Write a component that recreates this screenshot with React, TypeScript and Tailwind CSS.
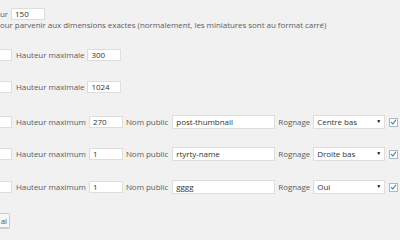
import React from 'react';

function Num({ value }: { value: string }) {
  return <div className="w-[34px] h-[12px] bg-white border border-[#dddddd] px-[3px] text-[8px] leading-[10px] text-[#333]">{value}</div>;
}

function Txt({ value, className = '' }: { value: string; className?: string }) {
  return <div className={"w-[103px] h-[14px] bg-white border border-[#dddddd] px-[3px] text-[8px] leading-[12px] text-[#333] " + className}>{value}</div>;
}

function Select({ value }: { value: string }) {
  return <div className="w-[72px] h-[14px] bg-white border border-[#dddddd] pl-[3px] pr-[3px] flex items-center justify-between text-[8px] text-[#333]">
    <span>{value}</span>
    <span className="text-[5px] text-black">▼</span>
  </div>;
}

function Check() {
  return <div className="w-[9px] h-[9px] bg-white border border-[#b4b9be] flex items-center justify-center">
    <svg viewBox="0 0 10 10" className="w-[8px] h-[8px]">
      <path d="M1.5 5.2 L4 7.6 L8.8 1.8" fill="none" stroke="#1e8cbe" strokeWidth="1.6" />
    </svg>
  </div>;
}

function Cut() {
  return <div className="w-[12px] h-[12px] bg-white border border-l-0 border-[#dddddd]" />;
}

function SizeRow({ h, name, crop, mt }: { h: string; name: string; crop: string; mt: string }) {
  return <div className={"flex items-center h-[16px] " + mt}>
    <Cut />
    <span className="ml-[4px]">Hauteur maximum</span>
    <div className="ml-[3px]"><Num value={h} /></div>
    <span className="ml-[3px]">Nom public</span>
    <div className="ml-[4px]"><Txt value={name} className={name === 'gggg' ? 'underline decoration-[#999]' : ''} /></div>
    <span className="ml-[3px]">Rognage</span>
    <div className="ml-[3px]"><Select value={crop} /></div>
    <div className="ml-[4px]"><Check /></div>
  </div>;
}

export default function App() {
  return <div className="w-[400px] h-[240px] overflow-hidden bg-[#f1f1f1] text-[8px] tracking-[-0.05px] text-[#606060] whitespace-nowrap" style={{ fontFamily: '"Open Sans", sans-serif' }}>
    <div className="flex items-center mt-[7px] h-[14px]">
      <span>ur</span>
      <div className="ml-[3px]"><Num value="150" /></div>
    </div>
    <div className="h-[10px] leading-[10px] -mt-[1px]">our parvenir aux dimensions exactes (normalement, les miniatures sont au format carré)</div>

    <div className="flex items-center h-[16px] mt-[17px]">
      <Cut />
      <span className="ml-[4px]">Hauteur maximale</span>
      <div className="ml-[3px]"><Num value="300" /></div>
    </div>
    <div className="flex items-center h-[16px] mt-[16px]">
      <Cut />
      <span className="ml-[4px]">Hauteur maximale</span>
      <div className="ml-[3px]"><Num value="1024" /></div>
    </div>

    <SizeRow h="270" name="post-thumbnail" crop="Centre bas" mt="mt-[19px]" />
    <SizeRow h="1" name="rtyrty-name" crop="Droite bas" mt="mt-[16px]" />
    <SizeRow h="1" name="gggg" crop="Oui" mt="mt-[17px]" />

    <div className="mt-[18px] h-[15px] w-[10px] bg-[#f7f7f7] border border-l-0 border-[#cccccc] rounded-r-[2px] flex items-center justify-end pr-[2px] text-[#555] shadow-[0_1px_0_#ccc]">al</div>
  </div>;
}
